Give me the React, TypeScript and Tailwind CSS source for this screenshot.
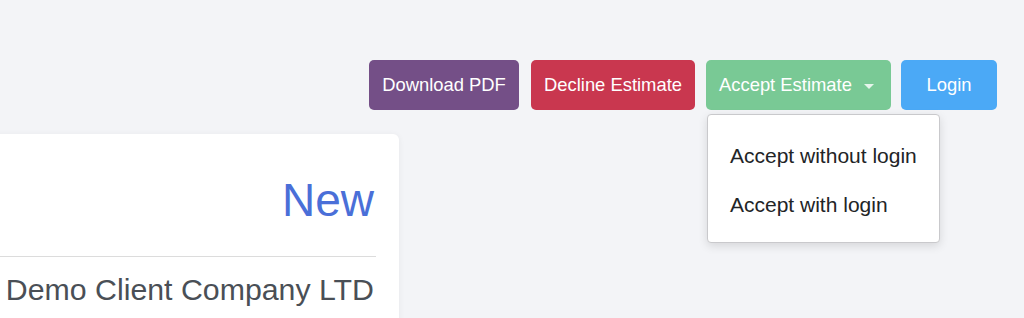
import React from "react";

export default function App() {
  return (
    <div
      className="relative w-[1024px] h-[318px] overflow-hidden bg-[#f3f4f7]"
      style={{ fontFamily: '"Liberation Sans", Arial, Helvetica, sans-serif' }}
    >
      <div className="flex justify-end pt-[60px] pr-[27px]">
        <div className="flex text-[18.4px] text-white">
          <button className="h-[50px] w-[150px] rounded-[5px] bg-[#744f87] flex items-center justify-center">
            Download PDF
          </button>
          <button className="ml-[12px] h-[50px] w-[164px] rounded-[5px] bg-[#c9374f] flex items-center justify-center">
            Decline Estimate
          </button>
          <div className="relative ml-[11px]">
            <button className="h-[50px] w-[185px] rounded-[5px] bg-[#79c995] flex items-center pl-[13px]">
              <span>Accept Estimate</span>
              <span className="ml-[12px] mt-[2px] w-0 h-0 border-l-[5px] border-r-[5px] border-t-[5px] border-l-transparent border-r-transparent border-t-[#e6f5eb]" />
            </button>
            <div className="absolute left-[1px] top-[54px] w-[233px] h-[129px] bg-white border border-[#c9c9cc] rounded-[4px] shadow-[0_3px_10px_rgba(0,0,0,0.12)] pl-[22px] pt-[30px] flex flex-col gap-[28px] text-[21px] leading-none text-[#222426] z-10">
              <div className="whitespace-nowrap">Accept without login</div>
              <div className="whitespace-nowrap">Accept with login</div>
            </div>
          </div>
          <button className="ml-[10px] h-[50px] w-[96px] rounded-[5px] bg-[#4ba9f6] flex items-center justify-center">
            Login
          </button>
        </div>
      </div>
      <div className="mt-[24px] ml-[-20px] w-[419px] h-[220px] bg-white rounded-[6px] shadow-[0_1px_6px_rgba(0,0,0,0.06)] pl-[20px] pr-[23px] pt-[43px]">
        <div className="text-right pr-[2px] text-[46px] leading-none text-[#4a6fd8]">New</div>
        <div className="mt-[33px] h-px bg-[#dcdcdc]" />
        <div className="mt-[18px] text-right pr-[2px] text-[30.3px] leading-none text-[#4a4f56] whitespace-nowrap">
          Demo Client Company LTD
        </div>
      </div>
    </div>
  );
}
